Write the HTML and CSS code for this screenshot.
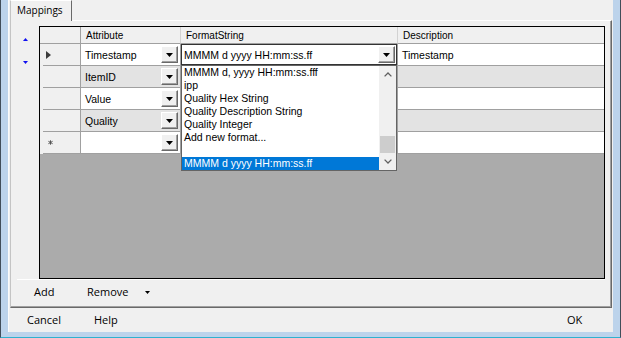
FILE: index.html
```html
<!DOCTYPE html>
<html>
<head>
<meta charset="utf-8">
<link rel="stylesheet" href="styles.css">
</head>
<body>
<div class="window">
  <div class="client">
    <div class="tabctl">
      <div class="tabstrip"><div class="tab">Mappings</div></div>
      <div class="tabpage">
        <div class="tabpage-inner">
          <div class="content">
            <div class="movers">
              <svg class="mv" width="5" height="3" viewBox="0 0 5 3"><path d="M2.5 0L5 3H0Z" fill="#1010f0"/></svg>
              <svg class="mv" width="5" height="3" viewBox="0 0 5 3"><path d="M0 0H5L2.5 3Z" fill="#1010f0"/></svg>
            </div>
            <div class="grid">
              <div class="gtable">
                <div class="hc hc-corner"></div>
                <div class="hc">Attribute</div>
                <div class="hc">FormatString</div>
                <div class="hc hc-last">Description</div>

                <div class="rh"><div class="rh-in"><svg width="5" height="8" viewBox="0 0 5 8"><path d="M0 0L5 4L0 8Z" fill="#3c3c3c"/></svg></div></div>
                <div class="c"><span class="txt">Timestamp</span><span class="dd"><svg width="7" height="4" viewBox="0 0 7 4"><path d="M0 0H7L3.5 4Z" fill="#000"/></svg></span></div>
                <div class="c c-edit"><div class="combo"><span class="combo-txt">MMMM d yyyy HH:mm:ss.ff</span><span class="dd dd-combo"><svg width="7" height="4" viewBox="0 0 7 4"><path d="M0 0H7L3.5 4Z" fill="#000"/></svg></span></div></div>
                <div class="c c-last">Timestamp</div>

                <div class="rh"><div class="rh-in"></div></div>
                <div class="c alt"><span class="txt">ItemID</span><span class="dd"><svg width="7" height="4" viewBox="0 0 7 4"><path d="M0 0H7L3.5 4Z" fill="#000"/></svg></span></div>
                <div class="c alt"></div>
                <div class="c alt c-last"></div>

                <div class="rh"><div class="rh-in"></div></div>
                <div class="c"><span class="txt">Value</span><span class="dd"><svg width="7" height="4" viewBox="0 0 7 4"><path d="M0 0H7L3.5 4Z" fill="#000"/></svg></span></div>
                <div class="c"></div>
                <div class="c c-last"></div>

                <div class="rh"><div class="rh-in"></div></div>
                <div class="c alt"><span class="txt">Quality</span><span class="dd"><svg width="7" height="4" viewBox="0 0 7 4"><path d="M0 0H7L3.5 4Z" fill="#000"/></svg></span></div>
                <div class="c alt"></div>
                <div class="c alt c-last"></div>

                <div class="rh"><div class="rh-in rh-new"><svg width="5" height="5" viewBox="0 0 5 5"><path d="M2.5 0.3V4.7M0.4 1.3L4.6 3.7M0.4 3.7L4.6 1.3" stroke="#555" stroke-width="1"/></svg></div></div>
                <div class="c"><span class="txt"></span><span class="dd"><svg width="7" height="4" viewBox="0 0 7 4"><path d="M0 0H7L3.5 4Z" fill="#000"/></svg></span></div>
                <div class="c"></div>
                <div class="c c-last"></div>
              </div>

              <div class="dropdown">
                <div class="dd-items">
                  <div class="item">MMMM d, yyyy HH:mm:ss.fff</div>
                  <div class="item">ipp</div>
                  <div class="item">Quality Hex String</div>
                  <div class="item">Quality Description String</div>
                  <div class="item">Quality Integer</div>
                  <div class="item">Add new format...</div>
                  <div class="item"></div>
                  <div class="item sel">MMMM d yyyy HH:mm:ss.ff</div>
                </div>
                <div class="dd-scroll">
                  <div class="sb-btn"><svg width="8" height="5" viewBox="0 0 8 5"><path d="M0.6 4.4L4 1L7.4 4.4" fill="none" stroke="#606060" stroke-width="1.3"/></svg></div>
                  <div class="sb-track"><div class="sb-thumb"></div></div>
                  <div class="sb-btn"><svg width="8" height="5" viewBox="0 0 8 5"><path d="M0.6 0.6L4 4L7.4 0.6" fill="none" stroke="#606060" stroke-width="1.3"/></svg></div>
                </div>
              </div>
            </div>
          </div>
          <div class="toolbar">
            <span class="tb-add">Add</span>
            <span class="tb-remove">Remove</span>
            <svg width="5" height="3" viewBox="0 0 5 3"><path d="M0 0H5L2.5 3Z" fill="#000"/></svg>
          </div>
        </div>
      </div>
    </div>
    <div class="footer">
      <span class="f-cancel">Cancel</span>
      <span class="f-help">Help</span>
      <span class="f-ok">OK</span>
    </div>
  </div>
</div>
</body>
</html>
```
FILE: styles.css
```css
* { box-sizing: border-box; }
html, body { margin: 0; padding: 0; }
body {
  width: 621px;
  height: 338px;
  overflow: hidden;
  font-family: "Liberation Sans", Arial, sans-serif;
  font-size: 10.5px;
  color: #000;
}
.window {
  width: 621px;
  height: 338px;
  background: #bcd3eb;
  border-left: 1px solid #414d59;
  border-right: 1px solid #414d59;
  border-bottom: 1px solid #2fb1cf;
  padding: 0 7px 5px 7px;
}
.client {
  height: 332px;
  background: #f0f0f0;
  border-left: 1px solid #fbfbfb;
  display: flex;
  flex-direction: column;
}
.tabctl {
  margin: 0 1px;
  height: 308px;
  display: flex;
  flex-direction: column;
}
.tabstrip {
  height: 20px;
  display: flex;
}
.tab {
  position: relative;
  z-index: 1;
  width: 62px;
  height: 21px;
  background: #f0f0f0;
  border-left: 1px solid #c4c4c4;
  border-top: 1px solid #ffffff;
  border-right: 1px solid #696969;
  padding-left: 6px;
  padding-bottom: 2px;
  font-family: "Open Sans", sans-serif;
  font-size: 10px;
  display: flex;
  align-items: center;
}
.tabpage {
  flex: 1;
  border-top: 1px solid #ffffff;
  border-left: 1px solid #c4c4c4;
  border-right: 1px solid #696969;
  border-bottom: 1px solid #696969;
}
.tabpage-inner {
  height: 100%;
  border-right: 1px solid #a0a0a0;
  border-bottom: 1px solid #a0a0a0;
  display: flex;
  flex-direction: column;
}
.content {
  display: flex;
  height: 258px;
  padding-top: 5px;
}
.movers {
  width: 28px;
  display: flex;
  flex-direction: column;
  align-items: center;
  padding-top: 12px;
  gap: 20px;
}
.mv { display: block; }
.grid {
  width: 566px;
  height: 253px;
  border: 1px solid #000;
  background: #ababab;
  position: relative;
}
.gtable {
  display: grid;
  grid-template-columns: 41px 100px 217px 206px;
  grid-template-rows: 17px repeat(5, 22px);
}
.hc {
  background: #f0f0f0;
  border-bottom: 1px solid #a0a0a0;
  border-right: 1px solid #d2d2d2;
  padding-left: 5px;
  font-size: 10px;
  display: flex;
  align-items: center;
}
.hc-corner { border-right: 1px solid #a0a0a0; }
.hc-last { border-right: none; }
.rh {
  background: #f0f0f0;
  border-right: 1px solid #a0a0a0;
  padding-left: 3px;
  display: flex;
}
.rh-in {
  flex: 1;
  border-bottom: 1px solid #a0a0a0;
  display: flex;
  align-items: center;
  padding-left: 3px;
}
.rh-in svg { display: block; }
.rh-new { padding-left: 5px; }
.c {
  background: #ffffff;
  border-right: 1px solid #a0a0a0;
  border-bottom: 1px solid #a0a0a0;
  display: flex;
  align-items: center;
  padding-left: 4px;
  white-space: nowrap;
}
.c.alt { background: #e3e3e3; }
.c-last { border-right: none; }
.txt { flex: 1; }
.dd {
  width: 17px;
  height: 17px;
  margin-right: 2px;
  background: #f0f0f0;
  border: 1px solid;
  border-color: #ffffff #696969 #696969 #ffffff;
  box-shadow: inset -1px -1px 0 #a0a0a0;
  display: flex;
  align-items: center;
  justify-content: center;
}
.dd svg { display: block; }
.c-edit {
  padding-left: 0;
  align-items: flex-start;
}
.combo {
  width: 216px;
  height: 21px;
  border: 1px solid #333333;
  background: #ffffff;
  display: flex;
  align-items: center;
  padding-left: 2px;
}
.combo-txt { flex: 1; }
.dd-combo { margin-right: 1px; }
.dropdown {
  position: absolute;
  left: 141px;
  top: 38px;
  width: 216px;
  height: 106px;
  border: 1px solid #646464;
  background: #ffffff;
  display: flex;
}
.dd-items {
  flex: 1;
  display: flex;
  flex-direction: column;
}
.item {
  height: 13px;
  line-height: 13px;
  padding-left: 2px;
  white-space: nowrap;
}
.item.sel {
  background: #0078d7;
  color: #ffffff;
}
.dd-scroll {
  width: 17px;
  background: #f0f0f0;
  display: flex;
  flex-direction: column;
}
.sb-btn {
  height: 17px;
  display: flex;
  align-items: center;
  justify-content: center;
}
.sb-btn svg { display: block; }
.sb-track {
  flex: 1;
  display: flex;
  flex-direction: column;
  justify-content: flex-end;
}
.sb-thumb {
  height: 17px;
  margin: 0 1px;
  background: #cdcdcd;
}
.toolbar {
  height: 27px;
  margin-left: 6px;
  margin-right: 5px;
  border-top: 1px solid #ffffff;
  display: flex;
  align-items: center;
  padding-left: 17px;
  padding-bottom: 3px;
  font-family: "Open Sans", sans-serif;
  font-size: 11px;
}
.tb-add { width: 53px; }
.tb-remove { width: 58px; }
.toolbar svg { display: block; margin-top: 1px; }
.footer {
  height: 24px;
  display: flex;
  align-items: center;
  padding-left: 18px;
  padding-bottom: 2px;
  font-family: "Open Sans", sans-serif;
  font-size: 11px;
}
.f-cancel { width: 67px; }
.f-help { width: 40px; }
.f-ok { margin-left: auto; width: 46px; }
```
